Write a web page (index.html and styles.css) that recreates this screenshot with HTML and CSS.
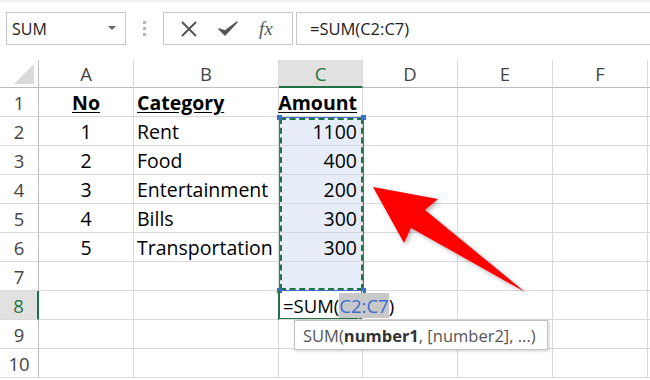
FILE: index.html
```html
<!DOCTYPE html>
<html>
<head>
<meta charset="utf-8">
<link rel="stylesheet" href="styles.css">
</head>
<body>
<div class="app">
  <div class="fbar">
    <div class="namebox"><span>SUM</span><span class="caret"></span></div>
    <div class="grip"><i></i><i></i><i></i></div>
    <div class="btns">
      <svg class="ico" width="20" height="20" viewBox="0 0 20 20"><path d="M3 3 L17 17 M17 3 L3 17" stroke="#555" stroke-width="2" fill="none"/></svg>
      <svg class="ico" width="22" height="20" viewBox="0 0 22 20"><path d="M2 10 L8 16 L20 3 L8 12 Z" fill="#555" stroke="#555" stroke-width="1.5" stroke-linejoin="round"/></svg>
      <span class="fx">fx</span>
    </div>
    <div class="formula">=SUM(C2:C7)</div>
  </div>

  <div class="sheet">
    <div class="grid">
      <div class="corner"><span class="tri"></span></div>
      <div class="ch">A</div><div class="ch">B</div><div class="ch sel">C</div><div class="ch">D</div><div class="ch">E</div><div class="ch">F</div><div class="ch"></div>

      <div class="rh">1</div><div class="c ctr b">No</div><div class="c b">Category</div><div class="c rt b">Amount</div><div class="c"></div><div class="c"></div><div class="c"></div><div class="c"></div>
      <div class="rh">2</div><div class="c ctr">1</div><div class="c">Rent</div><div class="c rt rng">1100</div><div class="c"></div><div class="c"></div><div class="c"></div><div class="c"></div>
      <div class="rh">3</div><div class="c ctr">2</div><div class="c">Food</div><div class="c rt rng">400</div><div class="c"></div><div class="c"></div><div class="c"></div><div class="c"></div>
      <div class="rh">4</div><div class="c ctr">3</div><div class="c">Entertainment</div><div class="c rt rng">200</div><div class="c"></div><div class="c"></div><div class="c"></div><div class="c"></div>
      <div class="rh">5</div><div class="c ctr">4</div><div class="c">Bills</div><div class="c rt rng">300</div><div class="c"></div><div class="c"></div><div class="c"></div><div class="c"></div>
      <div class="rh">6</div><div class="c ctr">5</div><div class="c">Transportation</div><div class="c rt rng">300</div><div class="c"></div><div class="c"></div><div class="c"></div><div class="c"></div>
      <div class="rh">7</div><div class="c"></div><div class="c"></div><div class="c rng"></div><div class="c"></div><div class="c"></div><div class="c"></div><div class="c"></div>
      <div class="rh act">8</div><div class="c"></div><div class="c"></div><div class="c edit">=SUM(<span class="ref">C2:C7</span><span class="cur"></span>)</div><div class="c"></div><div class="c"></div><div class="c"></div><div class="c"></div>
      <div class="rh">9</div><div class="c"></div><div class="c"></div><div class="c"></div><div class="c"></div><div class="c"></div><div class="c"></div><div class="c"></div>
      <div class="rh">10</div><div class="c"></div><div class="c"></div><div class="c"></div><div class="c"></div><div class="c"></div><div class="c"></div><div class="c"></div>
    </div>

    <div class="range"><i class="h tl"></i><i class="h tr"></i><i class="h bl"></i><i class="h br"></i></div>
    <div class="active"><i class="fill"></i></div>
    <div class="tip">SUM(<b>number1</b>, [number2], ...)</div>
    <svg class="arrow" width="650" height="320" viewBox="0 60 650 320">
      <defs>
        <filter id="sh" x="-20%" y="-20%" width="140%" height="140%">
          <feDropShadow dx="2" dy="2" stdDeviation="2" flood-color="#000" flood-opacity="0.3"/>
        </filter>
      </defs>
      <polygon points="373,187 438,199 425,210 525,292 411,228 404,243" fill="#ff0000" filter="url(#sh)"/>
    </svg>
  </div>
</div>
</body>
</html>
```

FILE: styles.css
```css
* { box-sizing: border-box; }
html, body { margin: 0; padding: 0; background: #fff; }
.app { width: 650px; height: 380px; overflow: hidden; position: relative; background: #fff; }

.fbar {
  height: 60px;
  display: flex;
  align-items: flex-start;
  padding-top: 12px;
  padding-left: 6px;
  font-family: "Open Sans", "Noto Sans", sans-serif;
  background: linear-gradient(#ececec 0, #fff 4px);
}
.namebox {
  width: 120px; height: 33px;
  border: 1px solid #c6c6c6;
  display: flex; align-items: center; justify-content: space-between;
  padding: 0 9px 0 5px;
  font-size: 16px; color: #222;
}
.caret {
  width: 0; height: 0;
  border-left: 4px solid transparent; border-right: 4px solid transparent;
  border-top: 4px solid #666;
  margin-bottom: 2px;
}
.grip {
  width: 37px; height: 33px;
  display: flex; flex-direction: column; align-items: center; justify-content: center; gap: 3px;
}
.grip i { width: 3px; height: 3px; background: #b5b5b5; display: block; }
.btns {
  width: 130px; height: 33px;
  border: 1px solid #c6c6c6;
  display: flex; align-items: center;
  padding-left: 15px; gap: 18px;
}
.ico { display: block; }
.fx { font-family: "Liberation Serif", serif; font-style: italic; font-size: 19px; color: #555; margin-left: 2px; }
.formula {
  flex: 1; height: 33px; margin-left: 3px;
  border: 1px solid #c6c6c6; border-right: none;
  display: flex; align-items: center;
  padding-left: 13px;
  font-size: 16.5px; color: #222;
}

.sheet { position: relative; }
.grid {
  display: grid;
  grid-template-columns: 39px 95px 145px 84px 95px 95px 95px 20px;
  grid-template-rows: 28px repeat(10, 29px);
  font-family: "Open Sans", "Noto Sans", sans-serif;
  font-size: 19.5px;
  color: #000;
}
.corner { border-right: 1px solid #bcbcbc; border-bottom: 1px solid #bcbcbc; position: relative; }
.tri {
  position: absolute; right: 4px; bottom: 3px;
  width: 0; height: 0;
  border-left: 20px solid transparent;
  border-bottom: 20px solid #dadada;
}
.ch {
  border-right: 1px solid #dadada;
  border-bottom: 1px solid #bcbcbc;
  display: flex; align-items: center; justify-content: center;
  font-family: "Open Sans", "Noto Sans", sans-serif;
  font-size: 18.5px; color: #444;
}
.ch.sel { background: #e1e1e1; color: #217346; border-bottom: 2px solid #217346; }
.rh {
  border-right: 1px solid #bcbcbc;
  border-bottom: 1px solid #dadada;
  display: flex; align-items: center; justify-content: center;
  font-family: "Open Sans", "Noto Sans", sans-serif;
  font-size: 18.5px; color: #444;
}
.rh.act { background: #e1e1e1; color: #217346; border-right: 2px solid #217346; }
.c {
  border-right: 1px solid #d9d9d9;
  border-bottom: 1px solid #d9d9d9;
  display: flex; align-items: center;
  padding: 0 3px;
  white-space: nowrap;
}
.ctr { justify-content: center; }
.rt { justify-content: flex-end; padding-right: 5px; }
.b { font-weight: 700; text-decoration: underline; text-underline-offset: 2px; }
.rng { background: #e7edf8; }
.edit { overflow: visible; z-index: 3; position: relative; padding-left: 4px; font-size: 18.5px; }
.ref { color: #3a6fd0; background: #c8c8c8; }
.cur { display: inline-block; width: 1px; height: 20px; background: #000; vertical-align: middle; }

.range {
  position: absolute; left: 279px; top: 57px; width: 85px; height: 174px;
  border: 1px solid #3c6fc4;
  outline: 2px dashed #217346; outline-offset: -3px;
  pointer-events: none;
}
.h { position: absolute; width: 5px; height: 5px; background: #3c6fc4; display: block; }
.tl { left: -3px; top: -3px; }
.tr { right: -3px; top: -3px; }
.bl { left: -3px; bottom: -3px; }
.br { right: -3px; bottom: -3px; }

.active {
  position: absolute; left: 278px; top: 231px; width: 86px; height: 29px;
  border-left: 2px solid #217346; border-bottom: 2px solid #217346;
  pointer-events: none;
}
.fill { position: absolute; right: 0; bottom: -4px; width: 6px; height: 6px; background: #217346; border: 1px solid #fff; display: block; }

.tip {
  position: absolute; left: 294px; top: 260px; width: 254px; height: 30px;
  background: #fff; border: 1px solid #c3c3c3;
  box-shadow: 1px 1px 3px rgba(0,0,0,0.2);
  font-family: "Open Sans", "Noto Sans", sans-serif;
  font-size: 16.5px; color: #555;
  display: flex; align-items: center; padding-left: 8px;
  z-index: 4;
}
.tip b { color: #333; }
.arrow { position: absolute; left: 0; top: 0; z-index: 5; }
```
